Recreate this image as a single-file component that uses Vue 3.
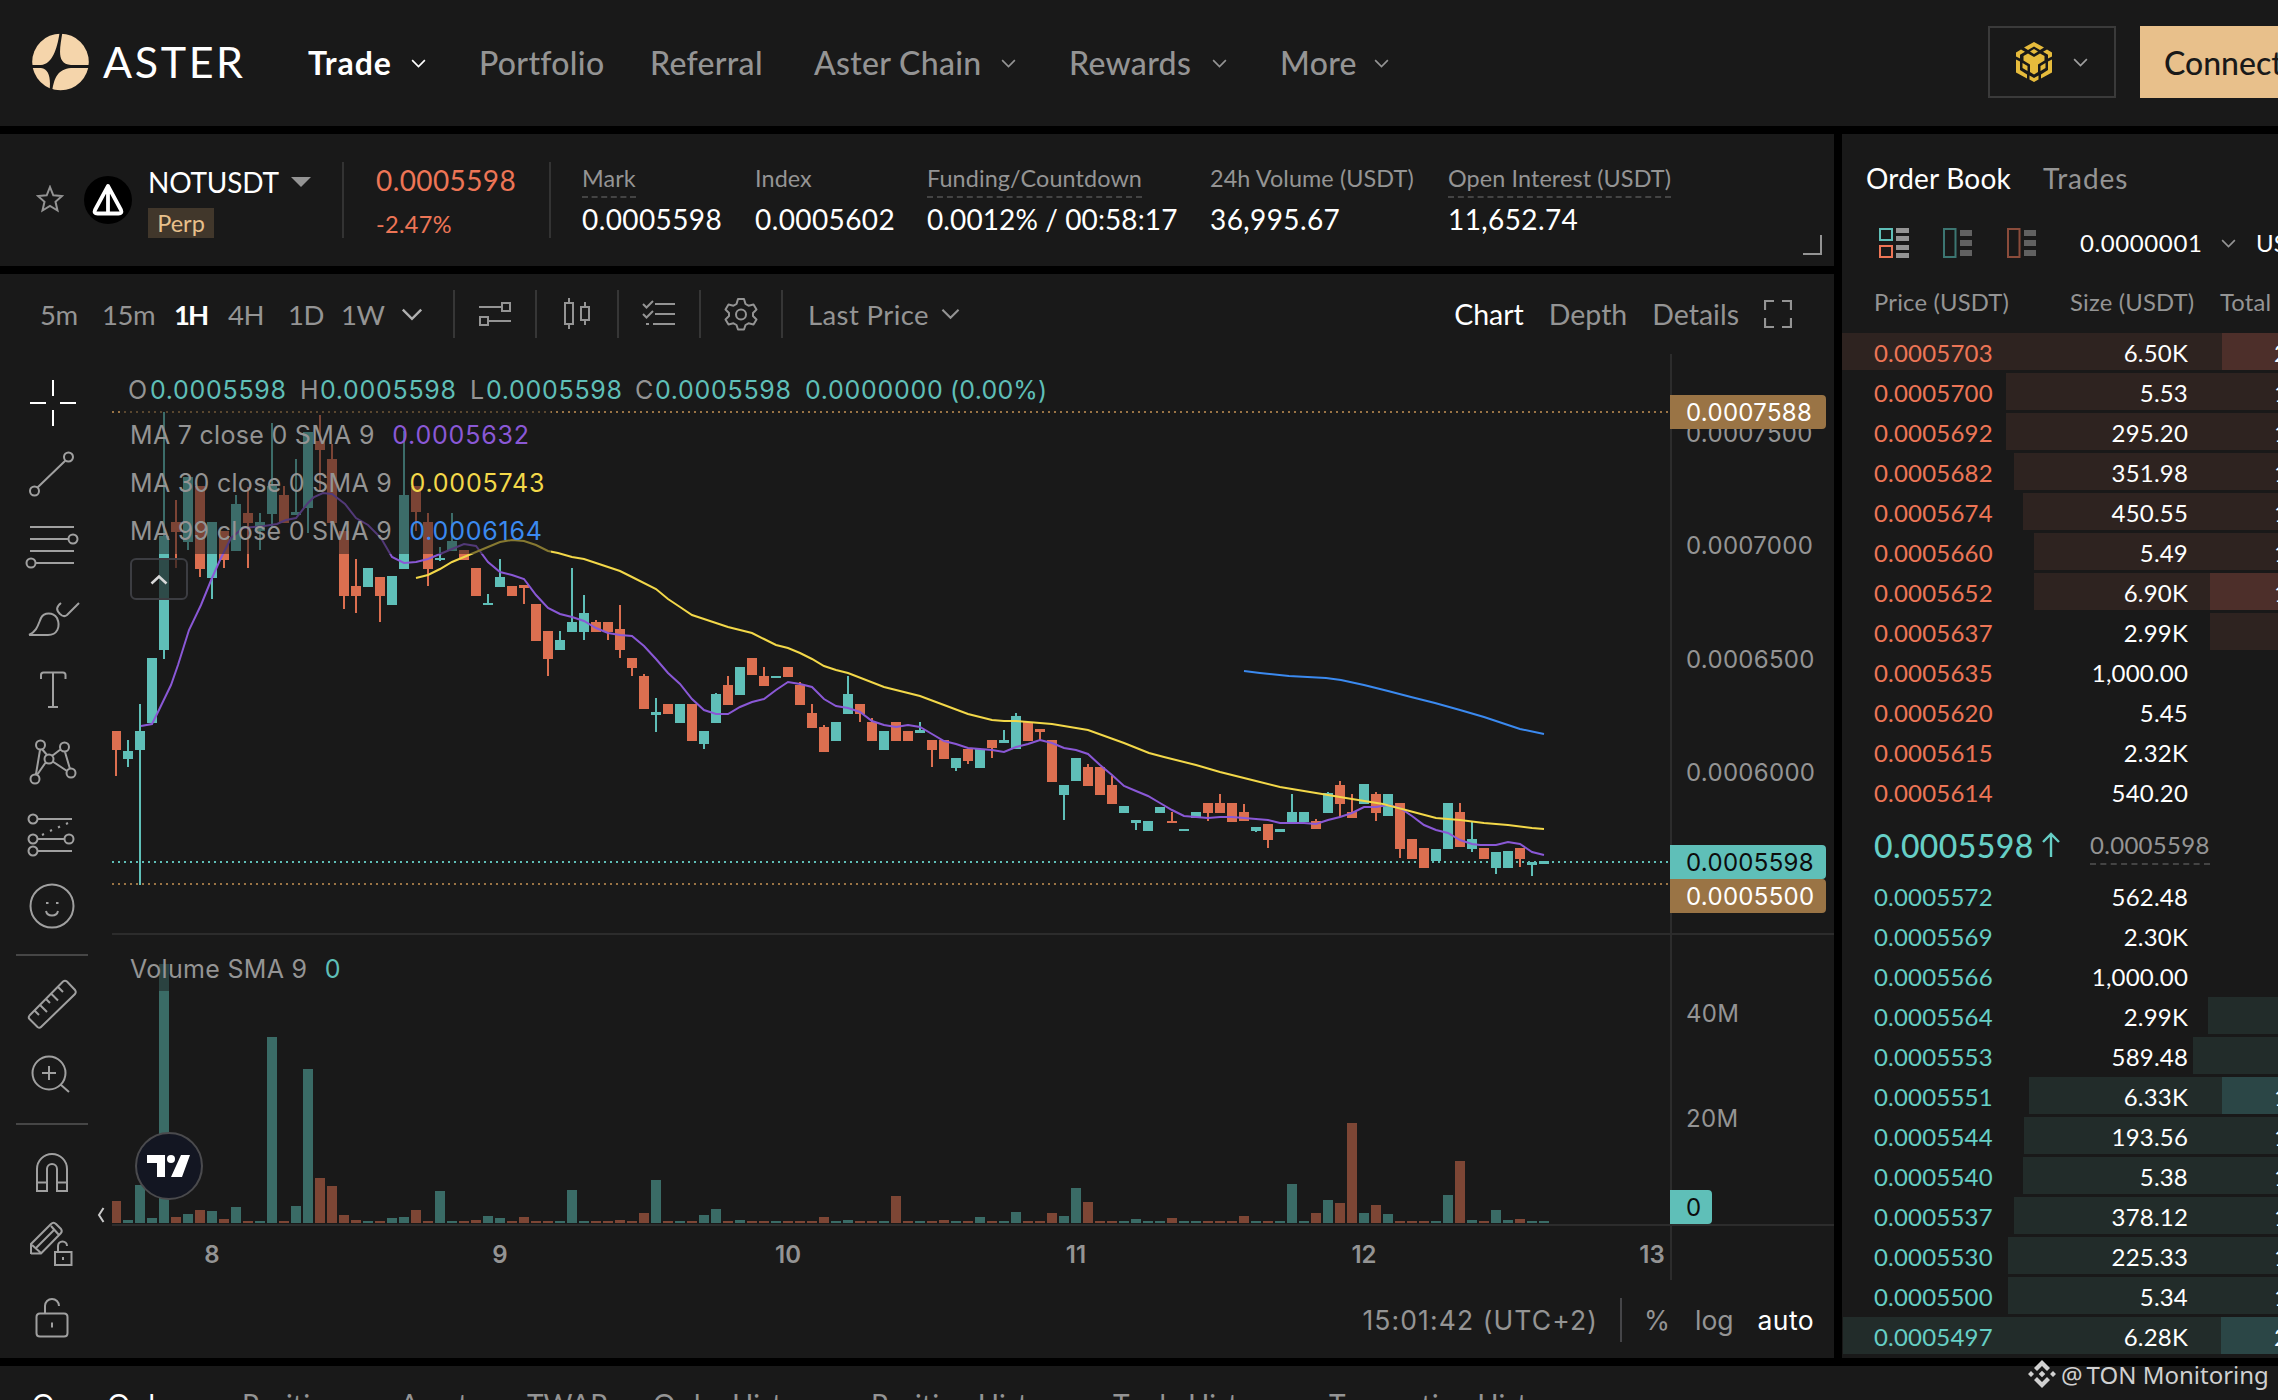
<script setup>
const navItems = [
  { label: 'Trade', menu: true, active: true },
  { label: 'Portfolio' },
  { label: 'Referral' },
  { label: 'Aster Chain', menu: true },
  { label: 'Rewards', menu: true },
  { label: 'More', menu: true },
]

const stats = [
  { label: 'Mark', value: '0.0005598', hint: true },
  { label: 'Index', value: '0.0005602' },
  { label: 'Funding/Countdown', value: '0.0012% / 00:58:17', hint: true },
  { label: '24h Volume (USDT)', value: '36,995.67' },
  { label: 'Open Interest (USDT)', value: '11,652.74', hint: true },
]

const intervals = ['5m', '15m', '1H', '4H', '1D', '1W']
const tabs = ['Open Orders', 'Positions', 'Assets', 'TWAP', 'Order History', 'Position History', 'Trade History', 'Transaction History']

// price, size, depth bar width, highlighted width, total
const asks = [
  ['0.0005703', '6.50K', 436, 56, '2'],
  ['0.0005700', '5.53', 272, 0, '1'],
  ['0.0005692', '295.20', 272, 0, '1'],
  ['0.0005682', '351.98', 264, 0, '1'],
  ['0.0005674', '450.55', 255, 0, '1'],
  ['0.0005660', '5.49', 244, 0, '1'],
  ['0.0005652', '6.90K', 244, 68, '1'],
  ['0.0005637', '2.99K', 68, 0, ''],
  ['0.0005635', '1,000.00', 0, 0, ''],
  ['0.0005620', '5.45', 0, 0, ''],
  ['0.0005615', '2.32K', 0, 0, ''],
  ['0.0005614', '540.20', 0, 0, ''],
]
const bids = [
  ['0.0005572', '562.48', 0, 0, ''],
  ['0.0005569', '2.30K', 0, 0, ''],
  ['0.0005566', '1,000.00', 0, 0, ''],
  ['0.0005564', '2.99K', 70, 0, ''],
  ['0.0005553', '589.48', 85, 0, ''],
  ['0.0005551', '6.33K', 249, 56, '1'],
  ['0.0005544', '193.56', 254, 0, '1'],
  ['0.0005540', '5.38', 255, 0, '1'],
  ['0.0005537', '378.12', 264, 0, '1'],
  ['0.0005530', '225.33', 270, 0, '1'],
  ['0.0005500', '5.34', 270, 0, '1'],
  ['0.0005497', '6.28K', 435, 57, '2'],
]

// direction, high, body top, body bottom, low, volume
const raw = [
  ['r', 731, 731, 750, 776, 22], ['g', 740, 751, 759, 767, 3], ['g', 704, 731, 750, 885, 38], ['g', 658, 658, 723, 723, 5],
  ['g', 412, 536, 650, 659, 259], ['r', 500, 522, 532, 568, 6], ['g', 477, 477, 542, 550, 9], ['r', 486, 486, 569, 577, 13],
  ['g', 522, 522, 578, 599, 12], ['r', 531, 531, 560, 568, 4], ['g', 495, 504, 551, 551, 16], ['r', 487, 513, 523, 568, 2],
  ['g', 513, 522, 531, 550, 2], ['g', 423, 486, 514, 527, 186], ['r', 486, 495, 523, 523, 2], ['g', 459, 512, 515, 515, 17],
  ['g', 432, 432, 508, 533, 154], ['r', 415, 441, 450, 492, 45], ['r', 444, 459, 523, 523, 37], ['r', 531, 531, 596, 609, 8],
  ['r', 559, 586, 596, 613, 3], ['g', 568, 568, 587, 587, 2], ['r', 577, 577, 596, 622, 2], ['g', 576, 576, 605, 605, 5],
  ['g', 431, 495, 569, 569, 6], ['r', 486, 486, 512, 531, 13], ['r', 513, 522, 569, 586, 2], ['g', 547, 558, 560, 561, 32],
  ['g', 513, 541, 551, 551, 2], ['r', 550, 550, 560, 560, 2], ['r', 568, 568, 596, 596, 3], ['g', 594, 603, 605, 605, 7],
  ['g', 559, 577, 587, 587, 5], ['r', 586, 586, 596, 596, 2], ['r', 585, 585, 588, 604, 6], ['r', 604, 604, 641, 641, 2],
  ['r', 631, 631, 659, 676, 2], ['g', 631, 640, 650, 650, 2], ['g', 568, 622, 632, 632, 33], ['g', 595, 613, 632, 640, 2],
  ['r', 620, 622, 632, 632, 2], ['r', 622, 622, 632, 640, 2], ['r', 605, 629, 650, 658, 3], ['r', 658, 658, 668, 676, 2],
  ['r', 674, 676, 709, 709, 10], ['g', 698, 712, 715, 732, 43], ['r', 704, 704, 714, 714, 2], ['g', 704, 704, 723, 723, 2],
  ['r', 704, 704, 741, 741, 2], ['g', 731, 731, 744, 749, 8], ['g', 693, 694, 723, 723, 14], ['r', 676, 685, 705, 705, 2],
  ['g', 667, 667, 695, 695, 3], ['r', 658, 658, 675, 675, 2], ['r', 667, 676, 686, 686, 2], ['g', 676, 676, 678, 678, 2],
  ['r', 667, 667, 677, 677, 2], ['r', 682, 685, 705, 705, 2], ['r', 704, 713, 728, 728, 2], ['r', 725, 727, 752, 752, 6],
  ['g', 722, 722, 741, 741, 2], ['g', 676, 694, 714, 714, 3], ['r', 704, 704, 714, 722, 2], ['r', 718, 722, 741, 741, 2],
  ['g', 731, 731, 750, 750, 2], ['r', 722, 722, 741, 741, 27], ['r', 731, 731, 741, 741, 2], ['g', 722, 730, 733, 733, 2],
  ['r', 740, 740, 750, 767, 2], ['r', 740, 740, 759, 759, 3], ['g', 758, 758, 768, 771, 2], ['r', 749, 749, 761, 764, 2],
  ['g', 749, 749, 768, 768, 6], ['r', 740, 740, 748, 758, 2], ['g', 730, 740, 743, 743, 2], ['g', 713, 716, 749, 749, 11],
  ['r', 722, 722, 741, 741, 2], ['r', 729, 729, 732, 740, 2], ['r', 740, 740, 782, 782, 10], ['g', 785, 785, 795, 820, 7],
  ['g', 758, 758, 781, 781, 35], ['r', 764, 767, 786, 786, 21], ['r', 767, 767, 795, 795, 2], ['r', 776, 785, 804, 804, 2],
  ['g', 806, 806, 813, 813, 2], ['g', 820, 820, 823, 830, 4], ['g', 821, 821, 831, 831, 2], ['g', 807, 807, 813, 813, 2],
  ['r', 812, 821, 823, 823, 5], ['g', 829, 829, 831, 831, 2], ['g', 812, 812, 818, 818, 2], ['r', 803, 803, 813, 821, 2],
  ['r', 794, 803, 813, 813, 2], ['r', 803, 803, 822, 822, 2], ['r', 804, 812, 821, 821, 7], ['g', 827, 827, 831, 832, 2],
  ['r', 824, 824, 840, 848, 2], ['g', 829, 829, 832, 832, 2], ['g', 794, 812, 822, 822, 39], ['g', 812, 812, 822, 822, 2],
  ['r', 819, 821, 829, 829, 10], ['g', 792, 793, 813, 813, 23], ['r', 781, 785, 804, 817, 20], ['r', 794, 812, 818, 818, 100],
  ['g', 784, 784, 804, 804, 10], ['r', 792, 794, 813, 821, 18], ['g', 794, 794, 816, 816, 9], ['r', 803, 803, 849, 858, 2],
  ['r', 839, 839, 859, 859, 2], ['r', 848, 848, 868, 868, 2], ['g', 849, 849, 861, 861, 2], ['g', 803, 803, 849, 849, 28],
  ['r', 803, 812, 847, 847, 62], ['g', 821, 839, 849, 852, 3], ['r', 848, 848, 859, 859, 2], ['g', 852, 852, 868, 874, 13],
  ['g', 851, 851, 868, 868, 3], ['r', 848, 848, 859, 867, 4], ['g', 862, 862, 865, 876, 2], ['g', 861, 861, 864, 864, 2],
]
const candles = raw.map(([dir, high, top, bottom, low, vol], i) => ({ x: 116 + i * 12, dir, high, top, bottom, low, vol }))

const ma7 = '141,726 152,724 157,714 171,685 178,665 189,630 201,605 212,578 220,560 231,538 243,528 264,526 277,524 286,520 296,518 308,503 314,497 323,493 332,494 345,504 356,518 368,525 381,538 392,557 404,563 416,562 428,559 440,554 452,549 464,544 476,546 488,562 500,572 512,575 524,579 536,595 548,608 560,614 572,617 584,621 596,628 608,633 620,635 632,636 644,646 656,659 668,673 680,684 692,699 704,710 716,714 728,714 740,707 752,702 764,699 776,690 788,682 800,684 812,687 824,699 836,706 848,708 860,712 872,721 884,725 896,727 908,725 920,727 932,734 944,741 956,744 968,748 980,749 992,750 1004,752 1016,747 1028,744 1040,740 1052,743 1064,748 1076,750 1088,754 1100,765 1112,775 1124,786 1136,791 1148,796 1160,803 1172,810 1184,816 1196,817 1208,818 1220,817 1232,817 1244,818 1256,819 1268,820 1280,823 1304,823 1316,824 1328,820 1340,817 1352,813 1364,807 1376,807 1388,805 1400,808 1412,816 1424,825 1436,830 1448,833 1460,840 1472,844 1480,845 1496,845 1508,842 1520,844 1532,852 1544,855'
const ma30 = '416,578 428,575 440,569 452,562 464,557 476,552 488,547 500,542 512,540 524,541 536,545 548,551 558,553 572,557 584,559 596,563 620,571 632,577 656,589 668,599 680,607 692,615 704,619 716,623 728,627 740,630 752,633 764,639 776,645 788,648 800,653 812,659 824,666 836,670 848,673 884,687 920,696 944,705 968,714 980,717 992,720 1004,721 1016,721 1052,724 1088,730 1124,743 1149,753 1164,757 1196,765 1220,772 1256,781 1280,787 1316,793 1328,795 1352,799 1383,804 1402,809 1436,818 1460,820 1484,823 1508,825 1532,828 1544,829'
const ma99 = '1244,671 1260,673 1289,676 1326,678 1341,680 1364,685 1376,688 1388,691 1411,697 1435,703 1460,710 1484,717 1508,725 1520,729 1544,734'

const priceTicks = [['0.0007500', 433], ['0.0007000', 545], ['0.0006500', 659], ['0.0006000', 772], ['40M', 1013], ['20M', 1118]]
const days = [[8, 212], [9, 500], [10, 788], [11, 1076], [12, 1364], [13, 1652]]

const ohlc = ['O', '0.0005598', 'H', '0.0005598', 'L', '0.0005598', 'C', '0.0005598', '0.0000000', '(0.00%)']

// drawing tools, each in a 104 x 72 box
const toolGroups = [
  [
    { name: 'cross', d: 'M53 13v16M53 43v16M30 36h16M60 36h16' },
    { name: 'line', d: 'M37 49L66 21M73 18a4.5 4.5 0 1 1-9 0a4.5 4.5 0 1 1 9 0M39 52a4.5 4.5 0 1 1-9 0a4.5 4.5 0 1 1 9 0' },
    { name: 'fib', d: 'M30 16h44M30 28h38M30 40h44M35 52h39M77.500 28a4.500 4.500 0 1 1-9 0a4.500 4.500 0 1 1 9 0M35.500 52a4.500 4.500 0 1 1-9 0a4.500 4.500 0 1 1 9 0' },
    { name: 'brush', d: 'M61 20C56 24 56 27 60 31L62 32.500Q64.500 34 67 32L79 20M29 52C37 48 38 42 41 35C44 29 53 29 57 35C61 44 57 52 48 52H29' },
    { name: 'text', d: 'M41 24V20Q41 17.500 43.500 17.500H63Q65.500 17.500 65.500 20V24M53 18V52M48 52H58' },
    { name: 'pattern', d: 'M45 18a4.500 4.500 0 1 1-9 0a4.500 4.500 0 1 1 9 0M69 20a4.500 4.500 0 1 1-9 0a4.500 4.500 0 1 1 9 0M53.500 32a4.500 4.500 0 1 1-9 0a4.500 4.500 0 1 1 9 0M39.500 52a4.500 4.500 0 1 1-9 0a4.500 4.500 0 1 1 9 0M75.500 46a4.500 4.500 0 1 1-9 0a4.500 4.500 0 1 1 9 0M40 23L36 47M42 22L47 28M52 29L61 22M46 35L37 48M52 34L67 44M65 25L70 42' },
    { name: 'forecast', d: 'M37.500 20a4.500 4.500 0 1 1-9 0a4.500 4.500 0 1 1 9 0M38 20H72M37.500 40a4.500 4.500 0 1 1-9 0a4.500 4.500 0 1 1 9 0M38 40H64M73.500 40a4.500 4.500 0 1 1-9 0a4.500 4.500 0 1 1 9 0M37.500 52a4.500 4.500 0 1 1-9 0a4.500 4.500 0 1 1 9 0M38 52H72M42 36l2-1M50 32l2-1M58 28.500l2-1M66 25l2-1' },
    { name: 'smile', d: 'M73.500 35a21.500 21.500 0 1 1-43 0a21.500 21.500 0 1 1 43 0M46 40Q47 44.500 52 44.500Q57 44.500 58 40M46 32h2.500M56 32h2.500' },
  ],
  [
    { name: 'ruler', d: 'M29.500 47.500L63 13.500Q65 12 67 13.500L75 22Q76.500 24 75 26L41 59Q39.500 60.500 37.500 59L29.500 51Q28 49.500 29.500 47.500M35 43l4 4M40 37l7 7M46 31l4 4M51 25.500l7 7M58 19l5 5' },
    { name: 'zoom', d: 'M65.500 33a16.500 16.500 0 1 1-33 0a16.500 16.500 0 1 1 33 0M42 33h14M49 26v14M60.500 44.500L69 52' },
  ],
  [
    { name: 'magnet', d: 'M37 54V32a15 15 0 0 1 30 0V54H57V32a5 5 0 0 0-10 0V54ZM37 45.500H47M57 45.500H67' },
    { name: 'pencil', d: 'M31 45V35L51 15Q53.500 12.500 56 15L61 20Q62.500 22 61 24L41 44.500H31ZM32 36L41 44M51 17L59 26M36 39L55 20M55 43h16.500v13H55ZM58 43V37a4.500 4.500 0 0 1 9 0M63 48v3' },
    { name: 'lock', d: 'M40 32.500H64Q67.500 32.500 67.500 36V52Q67.500 55.500 64 55.500H40Q36.500 55.500 36.500 52V36Q36.500 32.500 40 32.500ZM45 32V25a7 7 0 0 1 14 0M52 41.500v5' },
  ],
]
</script>

<template>
  <div class="page">
    <svg class="defs" width="0" height="0">
      <symbol id="chev" viewBox="0 0 20 12">
        <path d="M1.500 1.500L10 10L18.500 1.500" fill="none" stroke="currentColor" stroke-width="2.200" />
      </symbol>
    </svg>

    <header class="header">
      <svg class="logo" viewBox="32 33 58 58">
        <circle cx="60.500" cy="62" r="28.300" fill="#f5d5ab" />
        <path fill="#191919" d="M59.500 33L62.300 33C60 48 56 64 71 65L90 65V68H71C58 69 54 78 52.300 91H49.500C51 78 49 69 41 68H31V65H41C52 64 57 50 59.500 33Z" />
      </svg>
      <span class="brand">ASTER</span>
      <nav class="nav">
        <a v-for="item in navItems" :key="item.label" :class="{ active: item.active }">
          {{ item.label }}
          <svg v-if="item.menu" class="chev nav-chev"><use href="#chev" /></svg>
        </a>
      </nav>
      <button class="network">
        <svg class="bnb" viewBox="0 0 36 40" fill="#e6bb3c">
          <path d="M18 0L28 5.500L24 8L18 4.500L12 8L8 5.500ZM18 7L22 9.500L18 12L14 9.500Z" />
          <path d="M0 10.500L5 7.500L9 9.800L4 12.700V16.500L0 14.500ZM36 10.500L31 7.500L27 9.800L32 12.700V16.500L36 14.500Z" />
          <path d="M7.500 14L12 11.500L18 15L24 11.500L28.500 14V18.500L22 22.500V30L18 32.500L14 30V22.500L7.500 18.500Z" />
          <path d="M0 17.500L4 19.500V28L11 32.500V36.500L0 30.500ZM36 17.500L32 19.500V28L25 32.500V36.500L36 30.500Z" />
          <path d="M6.500 21L11.500 24V29L6.500 26ZM29.500 21L24.500 24V29L29.500 26Z" />
          <path d="M13.500 33.500L18 36L22.500 33.500V37.500L18 40L13.500 37.500Z" />
        </svg>
        <svg class="chev"><use href="#chev" /></svg>
      </button>
      <button class="connect">Connect</button>
    </header>

    <div class="main">
      <div class="left">
        <section class="ticker">
          <svg class="star" viewBox="0 0 28 28">
            <path d="M14 2L17.300 10.300L26 11L19.500 16.800L21.500 25.500L14 21L6.500 25.500L8.500 16.800L2 11L10.700 10.300Z" fill="none" stroke="#949494" stroke-width="2" />
          </svg>
          <svg class="coin" viewBox="0 0 48 48">
            <circle cx="24" cy="24" r="24" fill="#000" />
            <path d="M24 10L37 34Q38.500 37.500 34.500 37.500H13.500Q9.500 37.500 11 34ZM24 11V37" fill="none" stroke="#fff" stroke-width="3.800" stroke-linejoin="round" />
          </svg>
          <div class="pair">
            <div class="pair-name">NOTUSDT <i class="caret"></i></div>
            <span class="badge">Perp</span>
          </div>
          <div class="price">
            <div class="last">0.0005598</div>
            <div class="change">-2.47%</div>
          </div>
          <div class="stats">
            <div v-for="s in stats" :key="s.label" class="stat">
              <span :class="['stat-label', { hint: s.hint }]">{{ s.label }}</span>
              <span class="stat-value">{{ s.value }}</span>
            </div>
          </div>
          <i class="corner"></i>
        </section>

        <section class="chart">
          <div class="toolbar">
            <div class="intervals">
              <span v-for="t in intervals" :key="t" :class="{ active: t === '1H' }">{{ t }}</span>
              <svg class="chev big"><use href="#chev" /></svg>
            </div>
            <div class="tb-cell">
              <svg width="34" height="28" viewBox="0 0 34 28"><path d="M1 7H24M24 3h8v8h-8ZM10 21H33M2 17h8v8H2Z" /></svg>
            </div>
            <div class="tb-cell">
              <svg width="28" height="34" viewBox="0 0 28 34"><path d="M6 1V6M2 6h8v21H2ZM6 27v5M22 5v5M18 10h8v13h-8ZM22 23v5" /></svg>
            </div>
            <div class="tb-cell">
              <svg width="34" height="30" viewBox="0 0 34 30"><path d="M1 5l3.500 3.500L11 2M1 15l3.500 3.500L11 12M4 25h3M13 5h20M13 15h20M11 25h22" /></svg>
            </div>
            <div class="tb-cell">
              <svg width="34" height="34" viewBox="0 0 34 34">
                <path d="M14 2h6l1.500 5l3 1.700l5-1.200l3 5l-3.500 3.500v3l3.500 3.500l-3 5l-5-1.200l-3 1.700l-1.500 4.500h-6l-1.500-4.500l-3-1.700l-5 1.200l-3-5l3.500-3.500v-3l-3.500-3.500l3-5l5 1.200l3-1.700Z" stroke-linejoin="round" />
                <circle cx="17" cy="17.500" r="5" />
              </svg>
            </div>
            <div class="tb-price">Last Price <svg class="chev mid"><use href="#chev" /></svg></div>
            <div class="views">
              <span class="active">Chart</span><span>Depth</span><span>Details</span>
              <svg width="28" height="28" viewBox="0 0 28 28"><path d="M1 10V1h9M18 1h9v9M27 18v9h-9M10 27H1v-9" fill="none" stroke="#949494" stroke-width="2.200" /></svg>
            </div>
          </div>

          <div class="body">
            <aside class="tools">
              <div v-for="(group, g) in toolGroups" :key="g" class="tool-group">
                <svg v-for="t in group" :key="t.name" :class="['tool', t.name]" viewBox="0 0 104 72"><path :d="t.d" /></svg>
              </div>
            </aside>

            <div class="pane">
              <svg class="plot" viewBox="112 354 1722 926">
                <g v-for="c in candles" :key="'v' + c.x">
                  <rect :class="'v-' + c.dir" :x="c.x - 5" :y="1223 - c.vol" width="10" :height="c.vol" />
                </g>
                <g class="guides">
                  <path d="M112 412H1670M112 884H1670" stroke="#9a7445" />
                  <path d="M112 862H1670" stroke="#5fbfb8" />
                </g>
                <polyline :points="ma99" stroke="#3b8af0" class="ma" />
                <g v-for="c in candles" :key="c.x" :class="'c-' + c.dir">
                  <rect :x="c.x - 1" :y="c.high" width="2" :height="c.low - c.high" />
                  <rect :x="c.x - 5" :y="c.top" width="10" :height="c.bottom - c.top" />
                </g>
                <polyline :points="ma7" stroke="#8a58d6" class="ma" />
                <polyline :points="ma30" stroke="#f3d849" class="ma" />
                <path d="M1671 354V1280M112 934H1834M112 1225H1834" stroke="#2c2c2c" stroke-width="2" />
                <g class="axis">
                  <text v-for="t in priceTicks" :key="t[0]" x="1686" :y="t[1]" dy=".36em">{{ t[0] }}</text>
                </g>
                <g class="days">
                  <text v-for="d in days" :key="d[0]" :x="d[1]" y="1254" dy=".36em">{{ d[0] }}</text>
                </g>
                <path d="M1670 395H1822Q1826 395 1826 399V425Q1826 429 1822 429H1670ZM1670 879H1822Q1826 879 1826 883V909Q1826 913 1822 913H1670Z" fill="#9a7445" />
                <path d="M1670 845H1822Q1826 845 1826 849V875Q1826 879 1822 879H1670ZM1670 1190H1708Q1712 1190 1712 1194V1220Q1712 1224 1708 1224H1670Z" fill="#5fbfb8" />
                <g class="axis tags">
                  <text x="1686" y="412" dy=".36em">0.0007588</text>
                  <text x="1686" y="896" dy=".36em">0.0005500</text>
                  <text x="1686" y="862" dy=".36em" class="dark">0.0005598</text>
                  <text x="1686" y="1207" dy=".36em" class="dark">0</text>
                </g>
              </svg>

              <div class="legend">
                <div class="row ohlc"><span v-for="(p, i) in ohlc" :key="i" :class="{ teal: p.length > 1 }">{{ p }}</span></div>
                <div class="row">MA 7 close 0 SMA 9 <b class="purple">0.0005632</b></div>
                <div class="row">MA 30 close 0 SMA 9 <b class="yellow">0.0005743</b></div>
                <div class="row">MA 99 close 0 SMA 9 <b class="blue">0.0006164</b></div>
              </div>
              <div class="collapse"><svg width="18" height="11" viewBox="0 0 18 11"><path d="M1.500 9.500L9 2.500L16.500 9.500" fill="none" stroke="#d8d8d8" stroke-width="2.600" /></svg></div>
              <div class="legend vol"><div class="row">Volume SMA 9 <b class="teal">0</b></div></div>
              <div class="tv">
                <svg width="44" height="22" viewBox="0 0 44 22" fill="#fff"><path d="M0 0H18V22H10V8H0ZM34 0H43L35 22H24Z" /><circle cx="24" cy="4" r="4" /></svg>
              </div>
              <svg class="fold" viewBox="0 0 8 16"><path d="M6.500 1L2 8L6.500 15" fill="none" stroke="#c9c9c9" stroke-width="2" /></svg>

              <div class="status">
                <span class="clock">15:01:42 (UTC+2)</span>
                <i></i>
                <span class="pct">%</span><span class="log">log</span><span class="auto">auto</span>
              </div>
            </div>
          </div>
        </section>
      </div>

      <section class="book">
        <div class="book-tabs"><span class="active">Order Book</span><span>Trades</span></div>
        <div class="book-tools">
          <svg width="30" height="30" viewBox="0 0 30 30">
            <path d="M1 1h12v11H1Z" fill="none" stroke="#5fbfb8" stroke-width="2" />
            <path d="M1 18h12v11H1Z" fill="none" stroke="#ed7556" stroke-width="2" />
            <path d="M17 0h13v5H17ZM17 8h13v5H17ZM17 17h13v5H17ZM17 25h13v5H17Z" fill="#949494" />
          </svg>
          <svg width="30" height="30" viewBox="0 0 30 30">
            <path d="M1 1h11.500v28H1Z" fill="none" stroke="#3c7672" stroke-width="2" />
            <path d="M17 2h12v6H17ZM17 12h12v6H17ZM17 22h12v6H17Z" fill="#616161" />
          </svg>
          <svg width="30" height="30" viewBox="0 0 30 30">
            <path d="M1 1h11.500v28H1Z" fill="none" stroke="#8b4c3b" stroke-width="2" />
            <path d="M17 2h12v6H17ZM17 12h12v6H17ZM17 22h12v6H17Z" fill="#616161" />
          </svg>
          <span class="step">0.0000001</span>
          <svg class="chev"><use href="#chev" /></svg>
          <span class="unit">USDT</span>
        </div>
        <div class="book-head"><span>Price (USDT)</span><span>Size (USDT)</span><span>Total (USDT)</span></div>
        <div class="levels asks">
          <div v-for="r in asks" :key="r[0]" class="level">
            <i class="depth" :style="{ width: r[2] + 'px' }"></i>
            <i class="depth strong" :style="{ width: r[3] + 'px' }"></i>
            <span class="lv-price">{{ r[0] }}</span><span class="lv-size">{{ r[1] }}</span><span class="lv-total">{{ r[4] }}</span>
          </div>
        </div>
        <div class="spread">
          <span class="spread-last">0.0005598</span>
          <svg width="18" height="26" viewBox="0 0 18 26"><path d="M9 25V2M1 10L9 2L17 10" fill="none" stroke="#66cfc6" stroke-width="2.400" /></svg>
          <span class="spread-mark">0.0005598</span>
        </div>
        <div class="levels bids">
          <div v-for="r in bids" :key="r[0]" class="level">
            <i class="depth" :style="{ width: r[2] + 'px' }"></i>
            <i class="depth strong" :style="{ width: r[3] + 'px' }"></i>
            <span class="lv-price">{{ r[0] }}</span><span class="lv-size">{{ r[1] }}</span><span class="lv-total">{{ r[4] }}</span>
          </div>
        </div>
      </section>
    </div>

    <footer class="bottom">
      <span v-for="(t, i) in tabs" :key="t" :class="{ active: i === 0 }">{{ t }}</span>
    </footer>

    <div class="credit">
      <svg width="28" height="28" viewBox="0 0 28 28" fill="#d0d0d0">
        <path d="M14 0L22 8L19 11L14 6L9 11L6 8ZM14 28L22 20L19 17L14 22L9 17L6 20ZM14 10.700L17.300 14L14 17.300L10.700 14ZM3 11L6 14L3 17L0 14ZM25 11L28 14L25 17L22 14Z" />
      </svg>
      <span class="at">@</span><span>TON Monitoring</span>
    </div>
  </div>
</template>

<style>
body {
  background: #000;
}
</style>

<style scoped>
.page {
  position: relative;
  width: 2278px;
  height: 1400px;
  overflow: hidden;
  background: #000;
  color: #949494;
  font-family: Lato, sans-serif;
  display: flex;
  flex-direction: column;
  gap: 8px;
}

.page * {
  box-sizing: border-box;
}

.defs {
  position: absolute;
}

.active {
  color: #fff;
}

.chev {
  width: 15px;
  height: 9px;
  flex: none;
}

.chev.mid {
  width: 19px;
  height: 12px;
}

.chev.big {
  width: 22px;
  height: 13px;
  color: #b0b0b0;
}

/* header */
.header {
  flex: none;
  height: 126px;
  background: #191919;
  display: flex;
  align-items: center;
}

.logo {
  width: 58px;
  height: 58px;
  margin: -2px 0 0 32px;
}

.brand {
  width: 205px;
  margin: -4px 0 0 13px;
  color: #fff;
  font-size: 43px;
  letter-spacing: 2.6px;
}

.nav {
  margin-top: -2px;
  display: grid;
  grid-template-columns: 171px 171px 164px 255px 211px 162px;
  font-size: 32px;
  font-weight: 500;
  letter-spacing: 0.3px;
}

.nav a {
  display: flex;
  align-items: center;
  white-space: nowrap;
}

.nav .active {
  font-weight: 700;
  letter-spacing: 0.9px;
}

.nav-chev {
  margin: 2px 53px 0 auto;
}

.network {
  width: 128px;
  height: 72px;
  margin: -2px 24px 0 auto;
  padding: 0 0 0 26px;
  display: flex;
  align-items: center;
  gap: 21px;
  background: none;
  border: 2px solid #3a3a3a;
  color: #a0a0a0;
}

.bnb {
  width: 36px;
  height: 40px;
}

.connect {
  width: 138px;
  height: 72px;
  margin-top: -2px;
  padding: 0 0 0 24px;
  border: 0;
  background: #e8c08b;
  color: #191919;
  font: 500 32px Lato, sans-serif;
  text-align: left;
  white-space: nowrap;
  overflow: hidden;
}

/* main grid */
.main {
  flex: none;
  height: 1224px;
  display: grid;
  grid-template-columns: 1834px 436px;
  gap: 8px;
}

.left {
  display: flex;
  flex-direction: column;
  gap: 8px;
}

.ticker {
  position: relative;
  flex: none;
  height: 132px;
  background: #191919;
  display: flex;
  align-items: center;
}

.star {
  width: 28px;
  height: 28px;
  margin: -2px 0 0 36px;
}

.coin {
  width: 48px;
  height: 48px;
  margin-left: 20px;
}

.pair {
  width: 196px;
  height: 76px;
  margin-left: 16px;
  border-right: 2px solid #333;
}

.pair-name {
  display: flex;
  align-items: center;
  height: 40px;
  color: #fff;
  font-size: 28px;
  letter-spacing: -0.2px;
}

.caret {
  margin-left: 12px;
  border: 10px solid transparent;
  border-top-color: #949494;
  border-bottom: 0;
}

.badge {
  display: block;
  width: 66px;
  height: 30px;
  margin-top: 6px;
  line-height: 31px;
  text-align: center;
  font-size: 23.5px;
  color: #e8c08b;
  background: #41372b;
}

.price {
  width: 207px;
  height: 76px;
  padding-left: 32px;
  border-right: 2px solid #333;
  color: #ed7556;
}

.last {
  font-size: 28px;
  line-height: 36px;
  letter-spacing: 0.4px;
}

.change {
  margin-top: 12px;
  font-size: 23.5px;
  line-height: 28px;
  letter-spacing: 0.3px;
}

.stats {
  height: 76px;
  margin-left: 31px;
  display: grid;
  grid-template-columns: 173px 172px 283px 238px 240px;
  white-space: nowrap;
}

.stat {
  display: flex;
  flex-direction: column;
  align-items: flex-start;
}

.stat-label {
  height: 36px;
  font-size: 23.400px;
  line-height: 33px;
  letter-spacing: 0.1px;
}

.hint {
  border-bottom: 2px dashed #444;
}

.stat-value {
  margin-top: 2px;
  color: #fff;
  font-size: 28px;
  line-height: 38px;
  letter-spacing: 0.4px;
}

.stat:nth-child(3) .stat-value {
  letter-spacing: 0.1px;
}

.corner {
  position: absolute;
  right: 12px;
  bottom: 11px;
  width: 19px;
  height: 20px;
  border: solid #949494;
  border-width: 0 2px 2px 0;
}

/* chart panel */
.chart {
  flex: 1;
  background: #191919;
  display: flex;
  flex-direction: column;
}

.toolbar {
  height: 80px;
  display: flex;
  align-items: center;
  font-size: 27.500px;
}

.intervals {
  width: 453px;
  padding-left: 40px;
  display: grid;
  grid-template-columns: 62px 72px 54px 60px 53px 60px 30px;
  align-items: center;
  letter-spacing: -0.4px;
}

.intervals .active {
  font-weight: 700;
  letter-spacing: -2px;
}

.tb-cell {
  width: 82px;
  height: 48px;
  border-left: 2px solid #363636;
  display: flex;
  align-items: center;
  justify-content: center;
}

.tb-cell path,
.tb-cell circle {
  fill: none;
  stroke: #949494;
  stroke-width: 2;
}

.tb-price {
  height: 48px;
  padding-left: 25px;
  border-left: 2px solid #363636;
  display: flex;
  align-items: center;
  gap: 12px;
  letter-spacing: 0.4px;
}

.views {
  margin-left: auto;
  margin-right: 42px;
  display: flex;
  align-items: center;
  gap: 25px;
  font-size: 28.500px;
}

.body {
  flex: 1;
  display: flex;
}

.tools {
  width: 112px;
  padding-top: 13px;
}

.tool-group + .tool-group::before {
  content: '';
  display: block;
  width: 72px;
  height: 2px;
  margin: 11px 0 12px 16px;
  background: #464646;
}

.tool {
  display: block;
  width: 104px;
  height: 72px;
  fill: none;
  stroke: #a0a0a0;
  stroke-width: 2;
}

.tool.cross {
  stroke: #fff;
}

.pane {
  position: relative;
  flex: 1;
}

.plot {
  display: block;
  width: 1722px;
  height: 926px;
}

.v-r { fill: #7d4635; }
.v-g { fill: #3a6b66; }
.c-r { fill: #dc6f50; }
.c-g { fill: #5fbfb8; }

.ma {
  fill: none;
  stroke-width: 2;
}

.guides path {
  stroke-width: 2;
  stroke-dasharray: 2 4;
}

.axis,
.days {
  font: 24px Inter, sans-serif;
  fill: #949494;
}

.axis {
  letter-spacing: 0.3px;
}

.days {
  font-weight: 600;
  text-anchor: middle;
}

.tags {
  fill: #fff;
}

.dark {
  fill: #0c0c0c;
}

/* overlays on the plot dim whatever is drawn under them */
.legend {
  position: absolute;
  top: 13px;
  left: 9px;
  width: 430px;
  height: 187px;
  padding-left: 9px;
  background: rgba(25, 25, 25, 0.5);
  font: 25px Inter, sans-serif;
  letter-spacing: 0.3px;
}

.legend.vol {
  top: 590px;
  width: 220px;
  height: 47px;
}

.row {
  height: 48px;
  line-height: 50px;
  white-space: nowrap;
}

.row b {
  margin-left: 10px;
  font-weight: 400;
  letter-spacing: 0.8px;
}

.row.ohlc {
  height: 43px;
  line-height: 47px;
  margin-left: -2px;
  display: grid;
  grid-template-columns: 22px 150px 20px 150px 16px 149px 20px 150px 145px 100px;
  letter-spacing: 0.7px;
}

.row.ohlc span:last-child {
  letter-spacing: 0.2px;
}

.teal { color: #5fbfb8; }
.purple { color: #8a58d6; }
.yellow { color: #f3d849; }
.blue { color: #3b8af0; }

.collapse {
  position: absolute;
  top: 204px;
  left: 18px;
  width: 58px;
  height: 42px;
  border: 2px solid #3c3d42;
  border-radius: 6px;
  background: rgba(25, 25, 25, 0.7);
  display: flex;
  align-items: center;
  justify-content: center;
}

.tv {
  position: absolute;
  top: 778px;
  left: 23px;
  width: 68px;
  height: 68px;
  border: 2px solid #4a4a4d;
  border-radius: 50%;
  background: #131622;
  display: flex;
  align-items: center;
  justify-content: center;
}

.fold {
  position: absolute;
  top: 853px;
  left: -15px;
  width: 8px;
  height: 16px;
}

.status {
  height: 78px;
  padding: 2px 20px 0 0;
  display: flex;
  align-items: center;
  justify-content: flex-end;
  font: 26.5px Inter, sans-serif;
}

.status i {
  width: 2px;
  height: 44px;
  margin: 0 22px;
  background: #454548;
}

.clock {
  letter-spacing: 1.1px;
}

.log {
  margin: 0 24px 0 25px;
}

.auto {
  color: #fff;
  letter-spacing: 0.4px;
}

/* order book */
.book {
  background: #191919;
  overflow: hidden;
  white-space: nowrap;
}

.book-tabs {
  height: 88px;
  padding-left: 24px;
  display: flex;
  align-items: center;
  gap: 32px;
  font-size: 28px;
  letter-spacing: 0.2px;
}

.book-tabs span:last-child {
  letter-spacing: 0.9px;
}

.book-tools {
  height: 42px;
  padding-left: 37px;
  display: flex;
  align-items: center;
}

.book-tools svg:not(.chev) {
  flex: none;
  margin-right: 34px;
}

.step {
  flex: none;
  width: 141px;
  margin: -2px 0 0 9px;
  color: #fff;
  font-size: 24px;
  letter-spacing: 0.6px;
}

.unit {
  margin: -2px 0 0 20px;
  color: #fff;
  font-size: 24px;
}

.book-head {
  height: 69px;
  padding-left: 32px;
  display: grid;
  grid-template-columns: 196px 150px 160px;
  align-items: center;
  line-height: 76px;
  font-size: 23.800px;
  letter-spacing: 0.2px;
}

.level {
  position: relative;
  height: 40px;
  padding-left: 32px;
  display: grid;
  grid-template-columns: 134px 180px 90px;
  line-height: 39px;
  font-size: 24px;
  letter-spacing: 0.2px;
  color: #fff;
}

.level span {
  position: relative;
}

.lv-size {
  text-align: right;
}

.lv-total {
  padding-left: 86px;
}

.depth {
  position: absolute;
  top: 0;
  right: 0;
  height: 37px;
  background: #2e2320;
}

.depth.strong {
  background: #4d2f2a;
}

.asks .lv-price { color: #ed7556; }
.bids .lv-price { color: #66cfc6; }
.bids .depth { background: #222c2a; }
.bids .depth.strong { background: #2b4646; }

.spread {
  height: 64px;
  padding-left: 32px;
  display: flex;
  align-items: center;
}

.spread-last {
  width: 168px;
  color: #66cfc6;
  font-size: 32px;
  font-weight: 500;
  letter-spacing: 0.4px;
}

.spread-mark {
  height: 36px;
  margin: 4px 0 0 30px;
  line-height: 32px;
  font-size: 24px;
  letter-spacing: 0.3px;
  border-bottom: 2px dashed #444;
}

/* bottom tabs */
.bottom {
  flex: none;
  height: 76px;
  padding-left: 32px;
  background: #191919;
  display: grid;
  grid-template-columns: 210px 158px 127px 126px 218px 242px 216px 300px;
  align-items: center;
  font-size: 28px;
}

.credit {
  position: absolute;
  left: 2028px;
  top: 1359px;
  height: 30px;
  display: flex;
  align-items: center;
  color: #d0d0d0;
  font: 24px "Noto Sans", sans-serif;
  white-space: nowrap;
}

.at {
  margin: 0 4px 0 5px;
}
</style>
